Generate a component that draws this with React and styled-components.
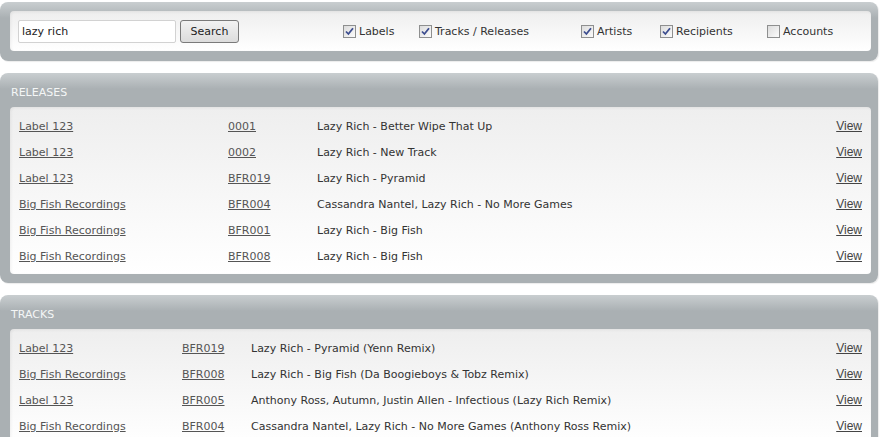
import React from "react";
import styled, { createGlobalStyle } from "styled-components";

const Global = createGlobalStyle`
  body {
    margin: 0;
    background: #fff;
    font-family: "DejaVu Sans", sans-serif;
    font-size: 11px;
    color: #333;
  }
`;

const Page = styled.div`
  width: 878px;
  padding-top: 2px;
  display: flex;
  flex-direction: column;
  gap: 12px;
`;

const Panel = styled.section`
  background: linear-gradient(#c9ced0 0px, #aab0b3 16px, #aab0b3 100%);
  border-radius: 8px;
  padding: ${(p) => (p.$header ? "0 7px 9px 10px" : "9px 7px 10px 10px")};
  box-shadow: 1px 1px 1px rgba(0, 0, 0, 0.08);
`;

const PanelTitle = styled.h2`
  margin: 0;
  box-sizing: border-box;
  height: 34px;
  padding: 4px 0 0 1px;
  display: flex;
  align-items: center;
  font-size: 11px;
  font-weight: normal;
  color: #f4f6f6;
  text-transform: uppercase;
`;

const Inner = styled.div`
  background: linear-gradient(#eeeeee, #ffffff);
  border-radius: 4px;
  box-shadow: inset 1px 1px 3px rgba(0, 0, 0, 0.06);
`;

const SearchBar = styled(Inner)`
  height: 40px;
  display: flex;
  align-items: center;
  padding-left: 8px;
`;

const SearchInput = styled.input`
  box-sizing: border-box;
  width: 158px;
  height: 23px;
  border: 1px solid #d2d2d2;
  border-radius: 2px;
  background: #fff;
  padding: 0 3px;
  font: inherit;
  color: #222;
  outline: none;
`;

const Button = styled.button`
  box-sizing: border-box;
  margin-left: 4px;
  width: 59px;
  height: 23px;
  border: 1px solid #7a7a7a;
  border-radius: 3px;
  background: linear-gradient(#f2f2f2, #dcdcdc);
  font: inherit;
  color: #222;
  padding: 0;
`;

const Filters = styled.div`
  display: flex;
  align-items: center;
  margin-left: 104px;
`;

const Filter = styled.label`
  display: flex;
  align-items: center;
  gap: 3px;
  width: ${(p) => (p.$width ? `${p.$width}px` : "auto")};
  color: #333;
`;

const Box = styled.span`
  box-sizing: border-box;
  width: 13px;
  height: 13px;
  border: 1px solid #8e8f8f;
  background: linear-gradient(135deg, #dcdcdc, #fbfbfb);
  display: flex;
  align-items: center;
  justify-content: center;
`;

const Rows = styled(Inner)`
  padding: 6px 9px 5px;
`;

const Row = styled.div`
  display: grid;
  grid-template-columns: ${(p) => p.$cols} 1fr auto;
  align-items: center;
  height: 26px;
`;

const Link = styled.a`
  color: #555;
  text-decoration: underline;
  justify-self: start;
`;

const ViewLink = styled(Link)`
  font-family: "Liberation Sans", Arial, sans-serif;
  font-size: 12px;
  color: #444;
`;

const Title = styled.span`
  color: #333;
`;

function Check({ checked, label, width }) {
  return (
    <Filter $width={width}>
      <Box>
        {checked && (
          <svg width="9" height="9" viewBox="0 0 9 9">
            <path d="M1 4.5 L3.4 7 L8 1.2" fill="none" stroke="#3c4d8f" strokeWidth="1.8" />
          </svg>
        )}
      </Box>
      {label}
    </Filter>
  );
}

const releases = [
  ["Label 123", "0001", "Lazy Rich - Better Wipe That Up"],
  ["Label 123", "0002", "Lazy Rich - New Track"],
  ["Label 123", "BFR019", "Lazy Rich - Pyramid"],
  ["Big Fish Recordings", "BFR004", "Cassandra Nantel, Lazy Rich - No More Games"],
  ["Big Fish Recordings", "BFR001", "Lazy Rich - Big Fish"],
  ["Big Fish Recordings", "BFR008", "Lazy Rich - Big Fish"],
];

const tracks = [
  ["Label 123", "BFR019", "Lazy Rich - Pyramid (Yenn Remix)"],
  ["Big Fish Recordings", "BFR008", "Lazy Rich - Big Fish (Da Boogieboys & Tobz Remix)"],
  ["Label 123", "BFR005", "Anthony Ross, Autumn, Justin Allen - Infectious (Lazy Rich Remix)"],
  ["Big Fish Recordings", "BFR004", "Cassandra Nantel, Lazy Rich - No More Games (Anthony Ross Remix)"],
];

function Results({ title, items, cols }) {
  return (
    <Panel $header>
      <PanelTitle>{title}</PanelTitle>
      <Rows>
        {items.map(([label, cat, name], i) => (
          <Row key={i} $cols={cols}>
            <Link href="#">{label}</Link>
            <Link href="#">{cat}</Link>
            <Title>{name}</Title>
            <ViewLink href="#">View</ViewLink>
          </Row>
        ))}
      </Rows>
    </Panel>
  );
}

export default function App() {
  return (
    <Page>
      <Global />
      <Panel>
        <SearchBar>
          <SearchInput defaultValue="lazy rich" />
          <Button>Search</Button>
          <Filters>
            <Check checked label="Labels" width={76} />
            <Check checked label="Tracks / Releases" width={162} />
            <Check checked label="Artists" width={79} />
            <Check checked label="Recipients" width={107} />
            <Check label="Accounts" />
          </Filters>
        </SearchBar>
      </Panel>
      <Results title="Releases" items={releases} cols="209px 89px" />
      <Results title="Tracks" items={tracks} cols="163px 69px" />
    </Page>
  );
}
